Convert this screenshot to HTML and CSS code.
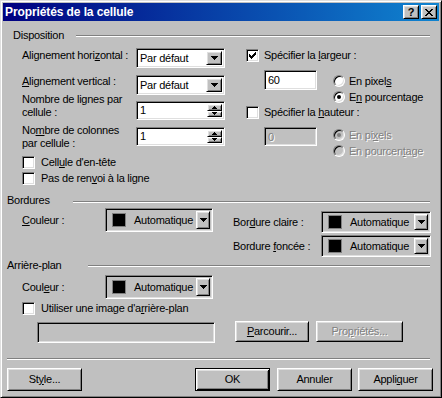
FILE: index.html
```html
<!DOCTYPE html>
<html>
<head>
    <meta charset="utf-8">
    <title>Propriétés de la cellule</title>
    <link rel="stylesheet" href="styles.css">
</head>
<body>
<div class="window">
    <div class="titlebar">
        <span class="title">Propriétés de la cellule</span>
        <span class="tbtn help">?</span>
        <span class="tbtn close"><svg width="8" height="7" viewBox="0 0 8 7"><path d="M0 0h2v1H0zM6 0h2v1H6zM1 1h2v1H1zM5 1h2v1H5zM2 2h4v1H2zM3 3h2v1H3zM2 4h4v1H2zM1 5h2v1H1zM5 5h2v1H5zM0 6h2v1H0zM6 6h2v1H6z"/></svg></span>
    </div>

    <div class="head head-disposition"><span class="head-label">Disposition</span><span class="etch"></span></div>
    <div class="disposition">
        <div class="disp-left">
            <div class="pairs">
                <div class="labels">
                    <div class="l1">Alignement hori<u>z</u>ontal :</div>
                    <div class="l2"><u>A</u>lignement vertical :</div>
                    <div class="l3">Nombre de lignes par<br>cellule :</div>
                    <div class="l4">No<u>m</u>bre de colonnes<br>par cellule :</div>
                </div>
                <div class="fields">
                    <div class="select f1">
                        <span class="value">Par défaut</span>
                        <span class="drop"><svg width="7" height="4" viewBox="0 0 7 4"><path d="M0 0h7v1H0zM1 1h5v1H1zM2 2h3v1H2zM3 3h1v1H3z"/></svg></span>
                    </div>
                    <div class="select f2">
                        <span class="value">Par défaut</span>
                        <span class="drop"><svg width="7" height="4" viewBox="0 0 7 4"><path d="M0 0h7v1H0zM1 1h5v1H1zM2 2h3v1H2zM3 3h1v1H3z"/></svg></span>
                    </div>
                    <div class="spin f3">
                        <span class="value">1</span>
                        <span class="spin-btns">
                            <span class="spin-up"><svg width="5" height="3" viewBox="0 0 5 3"><path d="M2 0h1v1H2zM1 1h3v1H1zM0 2h5v1H0z"/></svg></span>
                            <span class="spin-down"><svg width="5" height="3" viewBox="0 0 5 3"><path d="M0 0h5v1H0zM1 1h3v1H1zM2 2h1v1H2z"/></svg></span>
                        </span>
                    </div>
                    <div class="spin f4">
                        <span class="value">1</span>
                        <span class="spin-btns">
                            <span class="spin-up"><svg width="5" height="3" viewBox="0 0 5 3"><path d="M2 0h1v1H2zM1 1h3v1H1zM0 2h5v1H0z"/></svg></span>
                            <span class="spin-down"><svg width="5" height="3" viewBox="0 0 5 3"><path d="M0 0h5v1H0zM1 1h3v1H1zM2 2h1v1H2z"/></svg></span>
                        </span>
                    </div>
                </div>
            </div>
            <div class="check c1"><span class="box"></span><span>Cell<u>u</u>le d'en-tête</span></div>
            <div class="check c2"><span class="box"></span><span>Pas de ren<u>v</u>oi à la ligne</span></div>
        </div>

        <div class="disp-right">
            <div class="check rc1"><span class="box"><svg width="7" height="7" viewBox="0 0 7 7"><path d="M6 0h1v1H6zM5 1h2v1H5zM0 2h1v1H0zM4 2h3v1H4zM0 3h2v1H0zM3 3h3v1H3zM0 4h5v1H0zM1 5h3v1H1zM2 6h1v1H2z"/></svg></span><span>Spécifier la <u>l</u>argeur :</span></div>
            <div class="size-group rg1">
                <div class="input size-input">60</div>
                <div class="radios">
                    <div class="radio"><span class="dot-box"></span><span>En pixel<u>s</u></span></div>
                    <div class="radio"><span class="dot-box on"></span><span>E<u>n</u> pourcentage</span></div>
                </div>
            </div>
            <div class="check rc2"><span class="box"></span><span>Spécifier la <u>h</u>auteur :</span></div>
            <div class="size-group rg2">
                <div class="input size-input disabled">0</div>
                <div class="radios disabled">
                    <div class="radio"><span class="dot-box on"></span><span>En pi<u>x</u>els</span></div>
                    <div class="radio"><span class="dot-box"></span><span>En pourcen<u>t</u>age</span></div>
                </div>
            </div>
        </div>
    </div>

    <div class="head head-bordures"><span class="head-label">Bordures</span><span class="etch"></span></div>
    <div class="bordures">
        <div class="b-left">
            <div class="color-row">
                <span class="color-label"><u>C</u>ouleur :</span>
                <span class="colorbtn"><span class="swatch"></span><span class="ctext">Automatique</span><span class="drop"><svg width="7" height="4" viewBox="0 0 7 4"><path d="M0 0h7v1H0zM1 1h5v1H1zM2 2h3v1H2zM3 3h1v1H3z"/></svg></span></span>
            </div>
        </div>
        <div class="b-right">
            <div class="color-row">
                <span class="color-label">Bor<u>d</u>ure claire :</span>
                <span class="colorbtn"><span class="swatch"></span><span class="ctext">Automatique</span><span class="drop"><svg width="7" height="4" viewBox="0 0 7 4"><path d="M0 0h7v1H0zM1 1h5v1H1zM2 2h3v1H2zM3 3h1v1H3z"/></svg></span></span>
            </div>
            <div class="color-row">
                <span class="color-label">Bordure <u>f</u>oncée :</span>
                <span class="colorbtn"><span class="swatch"></span><span class="ctext">Automatique</span><span class="drop"><svg width="7" height="4" viewBox="0 0 7 4"><path d="M0 0h7v1H0zM1 1h5v1H1zM2 2h3v1H2zM3 3h1v1H3z"/></svg></span></span>
            </div>
        </div>
    </div>

    <div class="head head-fond"><span class="head-label">Arrière-plan</span><span class="etch"></span></div>
    <div class="fond">
        <div class="color-row">
            <span class="color-label">Coul<u>e</u>ur :</span>
            <span class="colorbtn"><span class="swatch"></span><span class="ctext">Automatique</span><span class="drop"><svg width="7" height="4" viewBox="0 0 7 4"><path d="M0 0h7v1H0zM1 1h5v1H1zM2 2h3v1H2zM3 3h1v1H3z"/></svg></span></span>
        </div>
        <div class="check fc"><span class="box"></span><span>Utiliser une image d'a<u>r</u>rière-plan</span></div>
        <div class="image-row">
            <div class="input image-input disabled"></div>
            <button class="btn browse"><span><u>P</u>arcourir...</span></button>
            <button class="btn props disabled"><span>Pro<u>p</u>riétés...</span></button>
        </div>
    </div>

    <div class="etch bottom-etch"></div>
    <div class="actions">
        <button class="btn"><span>St<u>y</u>le...</span></button>
        <span class="spacer"></span>
        <button class="btn default">OK</button>
        <button class="btn cancel">Annuler</button>
        <button class="btn apply"><span>Appli<u>q</u>uer</span></button>
    </div>
</div>
</body>
</html>
```

FILE: styles.css
```css
body {
    margin: 0;
    background: #c0c0c0;
    font-family: "Liberation Sans", Arial, sans-serif;
    font-size: 11px;
    line-height: 13px;
    letter-spacing: -0.25px;
    color: #000;
}
u {
    text-underline-offset: 1px;
}
.window {
    width: 442px;
    height: 398px;
    box-sizing: border-box;
    border: 1px solid;
    border-color: #dfdfdf #000 #000 #dfdfdf;
    box-shadow: inset 1px 1px #fff, inset -1px -1px #808080;
    padding: 2px;
    background: #c0c0c0;
}

/* title bar */
.titlebar {
    height: 18px;
    display: flex;
    align-items: center;
    padding: 0 2px;
    background: linear-gradient(90deg, #000080, #1084d0);
}
.title {
    flex: 1;
    color: #fff;
    font-weight: bold;
    font-size: 12px;
    letter-spacing: -0.1px;
}
.tbtn {
    width: 16px;
    height: 14px;
    box-sizing: border-box;
    display: flex;
    align-items: center;
    justify-content: center;
    background: #c0c0c0;
    border: 1px solid;
    border-color: #fff #000 #000 #fff;
    box-shadow: inset 1px 1px #dfdfdf, inset -1px -1px #808080;
    font-weight: bold;
    font-size: 11px;
    letter-spacing: 0;
}
.help {
    margin-right: 2px;
}

/* group headings */
.head {
    display: flex;
    height: 13px;
}
.etch {
    display: block;
    flex: 1;
    height: 0;
    border-top: 1px solid #808080;
    border-bottom: 1px solid #fff;
    margin-right: 9px;
}
.head-disposition {
    margin-top: 8px;
    padding-left: 10px;
}
.head-disposition .head-label { width: 63px; }
.head-disposition .etch { margin-top: 6px; }
.head-bordures {
    margin-top: 9px;
    padding-left: 4px;
}
.head-bordures .head-label { width: 66px; }
.head-bordures .etch { margin-top: 7px; }
.head-fond {
    margin-top: 2px;
    padding-left: 4px;
}
.head-fond .head-label { width: 81px; }
.head-fond .etch { margin-top: 6px; }

/* sunken / raised bits */
.select, .spin, .input, .colorbtn, .box, .dot-box {
    box-sizing: border-box;
    border: 1px solid;
    border-color: #808080 #fff #fff #808080;
    box-shadow: inset 1px 1px #000, inset -1px -1px #dfdfdf;
    background: #fff;
}
.drop, .spin-up, .spin-down, .btn {
    box-sizing: border-box;
    border: 1px solid;
    border-color: #fff #000 #000 #fff;
    box-shadow: inset 1px 1px #dfdfdf, inset -1px -1px #808080;
    background: #c0c0c0;
    display: flex;
    align-items: center;
    justify-content: center;
}

/* disposition */
.disposition {
    display: flex;
    height: 143px;
}
.disp-left {
    margin-left: 19px;
    width: 203px;
}
.pairs {
    display: flex;
}
.labels {
    width: 114px;
}
.l1 { margin-top: 7px; }
.l2 { margin-top: 13px; }
.l3 { margin-top: 5px; }
.l4 { margin-top: 5px; }
.fields {
    width: 89px;
}
.select, .spin {
    display: flex;
    align-items: center;
    padding: 2px;
}
.select .value, .spin .value {
    flex: 1;
    padding-left: 1px;
}
.select .drop {
    width: 16px;
    align-self: stretch;
}
.f1 { margin-top: 6px; height: 20px; }
.f2 { margin-top: 7px; height: 20px; }
.f3 { margin-top: 6px; height: 19px; }
.f4 { margin-top: 7px; height: 19px; }
.spin-btns {
    width: 15px;
    align-self: stretch;
    display: flex;
    flex-direction: column;
}
.spin-up, .spin-down {
    flex: 1;
}

.check {
    display: flex;
    align-items: center;
    height: 13px;
}
.box {
    width: 13px;
    height: 13px;
    margin-right: 6px;
    display: flex;
    align-items: center;
    justify-content: center;
}
.c1 { margin-top: 6px; }
.c2 { margin-top: 3px; }

.disp-right {
    margin-left: 21px;
}
.rc1 { margin-top: 7px; }
.rc1 .box { margin-right: 5px; }
.rc2 .box { margin-right: 5px; }
.size-group {
    display: flex;
    height: 36px;
    margin-top: 8px;
}
.rg2 {
    margin-top: 8px;
}
.size-input {
    width: 53px;
    height: 20px;
    margin-left: 18px;
    padding: 3px 0 0 3px;
}
.rg2 .size-input {
    height: 19px;
}
.radios {
    margin-left: 16px;
    margin-top: 3px;
}
.rg2 .radios {
    margin-top: 0;
}
.radio {
    display: flex;
    align-items: center;
    height: 16px;
}
.dot-box {
    width: 12px;
    height: 12px;
    border-radius: 50%;
    margin-right: 4px;
    display: flex;
    align-items: center;
    justify-content: center;
}
.dot-box.on::after {
    content: "";
    width: 4px;
    height: 4px;
    border-radius: 50%;
    background: #000;
}
.disabled {
    color: #808080;
    text-shadow: 1px 1px #fff;
}
.input.disabled, .disabled .dot-box {
    background: #c0c0c0;
}
.disabled .dot-box.on::after {
    background: #808080;
}

/* colour pickers */
.bordures {
    display: flex;
    height: 50px;
}
.b-left {
    margin-left: 19px;
    width: 191px;
}
.b-left .color-row {
    margin-top: 1px;
}
.b-right {
    margin-left: 20px;
}
.b-right .color-label { width: 88px; }
.b-right .color-row { margin-top: 2px; }
.b-right .color-row:first-child { margin-top: 4px; }
.b-right .colorbtn {
    width: 110px;
    height: 22px;
}
.color-row {
    display: flex;
    align-items: center;
}
.color-label {
    width: 83px;
}
.colorbtn {
    width: 108px;
    height: 24px;
    display: flex;
    align-items: center;
    padding: 2px;
    background: #c0c0c0;
}
.swatch {
    width: 12px;
    height: 12px;
    background: #000;
    border: 1px solid #808080;
    margin-left: 4px;
}
.ctext {
    flex: 1;
    margin-left: 8px;
}
.colorbtn .drop {
    width: 14px;
    align-self: stretch;
}

/* background */
.fond {
    padding-left: 19px;
}
.fond .color-row {
    margin-top: 3px;
}
.fc {
    margin-top: 3px;
}
.image-row {
    display: flex;
    align-items: flex-start;
    margin-top: 6px;
    height: 22px;
}
.image-input {
    width: 178px;
    height: 21px;
    margin-left: 15px;
    margin-top: 1px;
}
.btn {
    font: inherit;
    letter-spacing: inherit;
    color: #000;
    padding: 0;
    height: 21px;
}
.btn.disabled {
    color: #808080;
}
.browse {
    width: 74px;
    margin-left: 20px;
}
.props {
    width: 87px;
    margin-left: 7px;
}

/* bottom buttons */
.bottom-etch {
    margin: 15px 9px 0 4px;
}
.actions {
    display: flex;
    margin-top: 8px;
    padding: 0 6px 0 4px;
}
.actions .btn {
    width: 75px;
    height: 23px;
}
.spacer {
    flex: 1;
}
.btn.default {
    border-color: #000;
    box-shadow: inset 1px 1px #fff, inset -1px -1px #000, inset 2px 2px #dfdfdf, inset -2px -2px #808080;
}
.cancel {
    margin-left: 7px;
}
.apply {
    margin-left: 6px;
}
```
